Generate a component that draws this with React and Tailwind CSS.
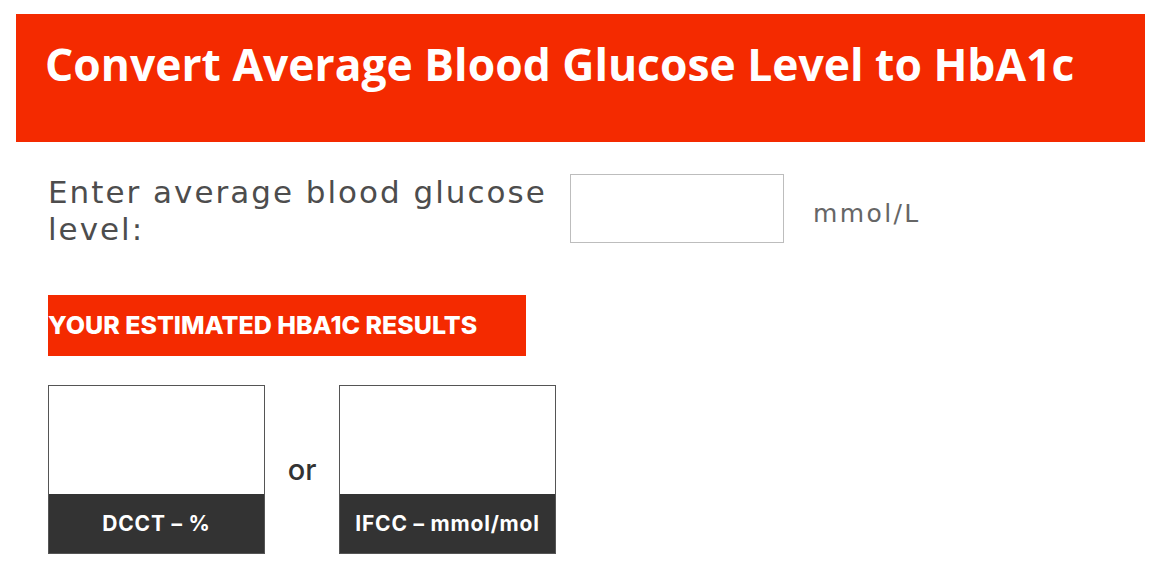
export default function App() {
  return (
    <div className="w-[1166px] h-[564px] bg-white overflow-hidden">
      <div className="pt-[14px] pl-[16px] pr-[21px]">
        <div className="h-[128px] bg-[#f42a00] pl-[29px] pt-[22px]">
          <h1 className="text-white text-[44.4px] font-bold leading-[56px] font-['Open_Sans',sans-serif]">
            Convert Average Blood Glucose Level to HbA1c
          </h1>
        </div>
      </div>

      <div className="pl-[48px] pt-[32px] flex items-start">
        <label className="w-[500px] text-[31px] leading-[37px] text-[#4d4d4d] font-['DejaVu_Sans',sans-serif] font-normal tracking-[2px]">
          Enter average blood glucose level:
        </label>
        <input
          type="text"
          className="ml-[22px] w-[214px] h-[69px] border border-[#bdbdbd] outline-none"
        />
        <span className="ml-[29px] mt-[25px] text-[25px] leading-[30px] text-[#666] font-['DejaVu_Sans',sans-serif] font-normal tracking-[2.4px]">
          mmol/L
        </span>
      </div>

      <div className="pl-[48px] pt-[47px]">
        <div className="w-[478px] h-[61px] bg-[#f42a00] flex items-center">
          <span className="text-white text-[25px] font-extrabold tracking-[0px] font-['Inter',sans-serif]">
            YOUR ESTIMATED HBA1C RESULTS
          </span>
        </div>
      </div>

      <div className="pl-[48px] pt-[29px] flex items-center">
        <ResultBox label="DCCT – %" />
        <span className="w-[74px] text-center text-[29px] text-[#333] font-medium font-['Inter',sans-serif]">or</span>
        <ResultBox label="IFCC – mmol/mol" />
      </div>
    </div>
  );
}

function ResultBox({ label }) {
  return (
    <div className="w-[217px] h-[169px] border border-[#555] flex flex-col">
      <div className="flex-1 bg-white" />
      <div className="h-[59px] bg-[#333] flex items-center justify-center text-white text-[21px] font-bold tracking-[0.8px] font-['Inter',sans-serif]">
        {label}
      </div>
    </div>
  );
}
